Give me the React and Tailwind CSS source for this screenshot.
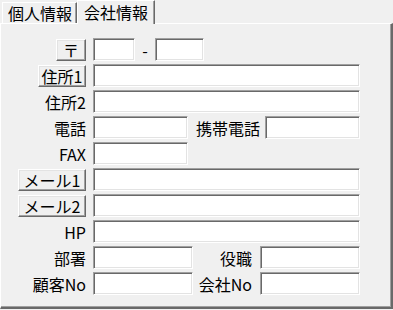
import React from 'react';

const Field = ({ w }) => (
    <div
        className={`h-[23px] bg-white border border-t-[#a0a0a0] border-l-[#a0a0a0] border-r-white border-b-white shadow-[inset_1px_1px_0_#696969,inset_-1px_-1px_0_#e3e3e3] ${w}`}
    />
);

const Btn = ({ w, children }) => (
    <button
        className={`h-[22px] ${w} flex items-center justify-center bg-[#f0f0f0] border border-t-white border-l-white border-r-[#696969] border-b-[#696969] shadow-[inset_-1px_-1px_0_#a0a0a0,inset_1px_1px_0_#e3e3e3] leading-none`}
    >
        {children}
    </button>
);

const Label = ({ children }) => <span className="leading-none">{children}</span>;

const Row = ({ left, children }) => (
    <div className="flex items-center h-[23px]">
        <div className="w-[85px] flex justify-end">{left}</div>
        <div className="ml-[7px] flex items-center">{children}</div>
    </div>
);

const App = () => {
    return (
        <div className="w-[393px] h-[310px] bg-[#f0f0f0] text-black text-[16px] font-['Noto_Sans_CJK_JP',sans-serif] overflow-hidden">
            {/* tabs */}
            <div className="flex h-[23px]">
                <div className="mt-[2px] ml-[2px] w-[75px] h-[21px] flex items-center pl-[5px] border-t border-l border-t-white border-l-white border-r border-r-[#696969] shadow-[inset_-1px_0_0_#a0a0a0]">
                    <span className="leading-none">個人情報</span>
                </div>
                <div className="relative z-10 w-[78px] h-[24px] flex items-start pt-[3px] pl-[6px] bg-[#f0f0f0] border-t border-l border-t-white border-l-white border-r border-r-[#696969] shadow-[inset_-1px_0_0_#a0a0a0]">
                    <span className="leading-none">会社情報</span>
                </div>
            </div>

            {/* panel */}
            <div className="h-[286px] border-t border-l border-t-white border-l-white border-r-2 border-b-2 border-r-[#696969] border-b-[#696969] shadow-[inset_-1px_-1px_0_#a0a0a0] pt-[14px] flex flex-col gap-[3px]">
                <Row left={<Btn w="w-[30px]">〒</Btn>}>
                    <Field w="w-[42px]" />
                    <div className="w-[20px] flex justify-center leading-none">-</div>
                    <Field w="w-[49px]" />
                </Row>
                <Row left={<Btn w="w-[48px]">住所1</Btn>}>
                    <Field w="w-[267px]" />
                </Row>
                <Row left={<Label>住所2</Label>}>
                    <Field w="w-[267px]" />
                </Row>
                <Row left={<Label>電話</Label>}>
                    <Field w="w-[95px]" />
                    <div className="w-[72px] flex justify-end">
                        <Label>携帯電話</Label>
                    </div>
                    <div className="ml-[5px]">
                        <Field w="w-[95px]" />
                    </div>
                </Row>
                <Row left={<Label>FAX</Label>}>
                    <Field w="w-[95px]" />
                </Row>
                <Row left={<Btn w="w-[68px]">メール1</Btn>}>
                    <Field w="w-[267px]" />
                </Row>
                <Row left={<Btn w="w-[68px]">メール2</Btn>}>
                    <Field w="w-[267px]" />
                </Row>
                <Row left={<Label>HP</Label>}>
                    <Field w="w-[267px]" />
                </Row>
                <Row left={<Label>部署</Label>}>
                    <Field w="w-[100px]" />
                    <div className="w-[59px] flex justify-end">
                        <Label>役職</Label>
                    </div>
                    <div className="ml-[8px]">
                        <Field w="w-[100px]" />
                    </div>
                </Row>
                <Row left={<Label>顧客No</Label>}>
                    <Field w="w-[100px]" />
                    <div className="w-[59px] flex justify-end">
                        <Label>会社No</Label>
                    </div>
                    <div className="ml-[8px]">
                        <Field w="w-[100px]" />
                    </div>
                </Row>
            </div>
        </div>
    );
};

export default App;
